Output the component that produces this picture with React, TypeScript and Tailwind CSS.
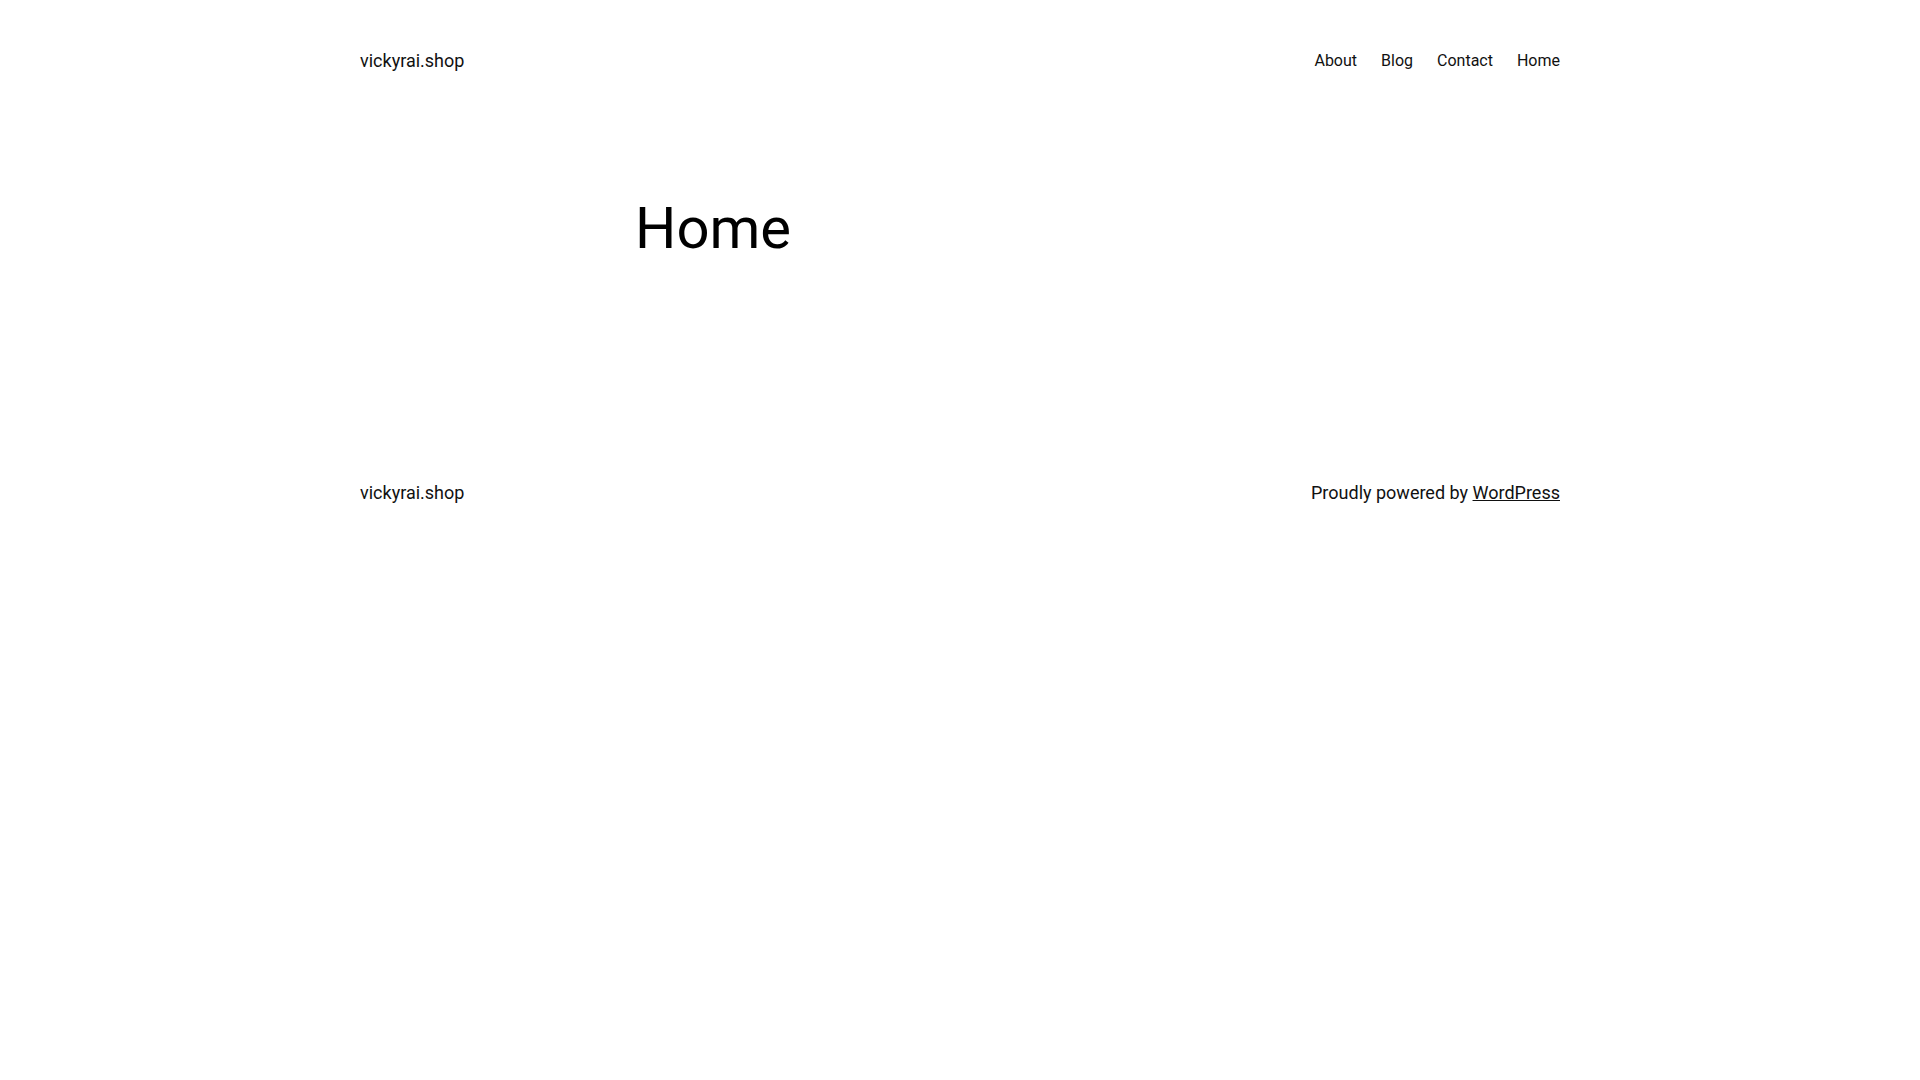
import React from "react";

const navItems = ["About", "Blog", "Contact", "Home"];

const App = () => {
  return (
    <div className="min-h-screen w-full bg-white text-black font-['Roboto',sans-serif]">
      <header className="mx-auto flex w-[1200px] items-center justify-between pt-[47px]">
        <a href="#" className="text-[18px] leading-[28px] text-[#111]">
          vickyrai.shop
        </a>
        <nav className="flex gap-6 text-[16px] leading-[28px] text-[#111]">
          {navItems.map((item) => (
            <a key={item} href="#">
              {item}
            </a>
          ))}
        </nav>
      </header>

      <main className="mx-auto w-[650px] pt-[117px] pb-[215px]">
        <h1 className="text-[58px] leading-[72px] font-normal">Home</h1>
      </main>

      <footer className="mx-auto flex w-[1200px] items-center justify-between">
        <a href="#" className="text-[18px] leading-[28px] text-[#111]">
          vickyrai.shop
        </a>
        <p className="text-[18px] leading-[28px] text-[#111]">
          Proudly powered by{" "}
          <a href="#" className="underline">
            WordPress
          </a>
        </p>
      </footer>
    </div>
  );
};

export default App;
